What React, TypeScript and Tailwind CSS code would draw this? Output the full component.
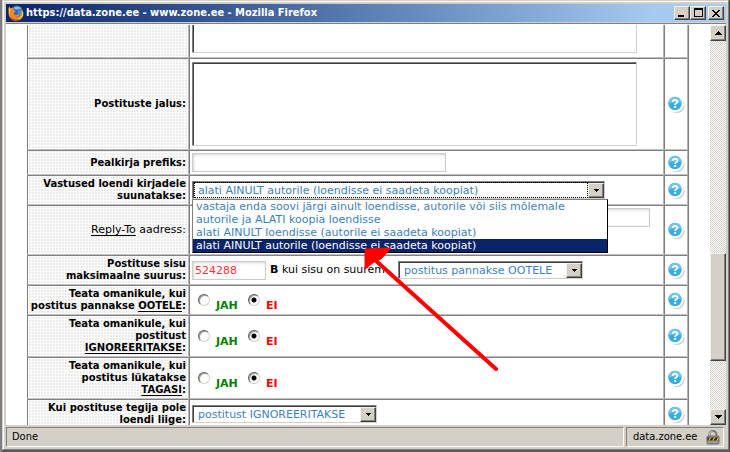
import { useState, type ReactNode } from 'react'

const REPLY_OPTIONS = [
  'vastaja enda soovi järgi ainult loendisse, autorile või siis mõlemale',
  'autorile ja ALATI koopia loendisse',
  'alati AINULT loendisse (autorile ei saadeta koopiat)',
  'alati AINULT autorile (loendisse ei saadeta koopiat)',
]

const raised = 'border border-t-[#f4f2ee] border-l-[#f4f2ee] border-r-[#404040] border-b-[#404040] bg-[#d4d0c8] shadow-[inset_-1px_-1px_0_#808080]'
const sunken = 'border border-t-[#808080] border-l-[#808080] border-r-[#d4d0c8] border-b-[#d4d0c8] shadow-[inset_1px_1px_0_#404040]'

function FirefoxIcon() {
  return (
    <svg viewBox="0 0 16 16" className="h-4 w-4 shrink-0" aria-hidden="true">
      <circle cx="9" cy="6.500" r="6" fill="#2a6cb0" />
      <path d="M6 2.500C8 .8 12 1 13.500 4c-2-.6-3 1-5 .6C7 4.500 6 4 6 2.500z" fill="#7cc0ea" />
      <path d="M10 5l3 .5.8 2.500-2 2.500-2-1z" fill="#4b8fd0" />
      <path
        d="M1 1.500l1.500 1.800C3.500 2.600 5 2.500 6 3L5 4.800l2.600.9-.6 1.500L5.500 8c.4 2 2.500 2.500 4 1.700.8-.4 1.600-.2 1.700.6-1 1.500-3 1.800-4.200 1.500 3 1.200 6-.6 6.300-4 .1-1.600-.2-3-1-4.300 2.400 1.700 3.500 4.300 3 7-.7 3.200-3.600 5.200-7 5.200C4 15.700.7 12.500.5 8.400.3 5.800.5 3.500 1 1.500z"
        fill="#f58a20"
      />
      <path d="M1 2l1.500 2.300C1.500 6 1.500 8.500 2.500 10.500 1 8.500.5 5 1 2z" fill="#ffc933" />
      <path d="M15 6c.8 4-1.500 7.500-5.500 8 2.800-1.400 5-4 5-7.500z" fill="#ffd84a" />
      <path d="M2 11c2 3.500 6 4.200 9 2.700-2.500 2.800-7.500 2-9-2.700z" fill="#c9380c" />
    </svg>
  )
}

function LockIcon() {
  return (
    <svg viewBox="0 0 14 15" className="h-[15px] w-3.5" aria-hidden="true">
      <path d="M3.500 7V4.500a3.500 3.500 0 0 1 7 0V7" fill="none" stroke="#777" strokeWidth="2" />
      <path d="M3.500 6V4.500a3 3 0 0 1 3-3" fill="none" stroke="#ccc" />
      <rect x="1" y="6" width="12" height="8" rx="1" fill="#9a9a9a" stroke="#6c6c6c" />
      <rect x="1.500" y="7.500" width="11" height="3" fill="#222" />
      <path d="M2 10.500l2-3h1.500l-2 3zM6 10.500l2-3h1.500l-2 3zM10 10.500l2-3h.5v2l-1 1z" fill="#f4c400" />
    </svg>
  )
}

function Triangle({ up }: { up?: boolean }) {
  return (
    <svg viewBox="0 0 7 4" className="h-1 w-[7px]" shapeRendering="crispEdges" aria-hidden="true">
      <path d={up ? 'M3 0h1v1h1v1h1v1h1v1H0V3h1V2h1V1h1z' : 'M0 0h7v1H6v1H5v1H4v1H3V3H2V2H1V1H0z'} />
    </svg>
  )
}

function HelpButton() {
  return (
    <button type="button" aria-label="Abi" className="block h-5 w-[22px]">
      <svg viewBox="0 0 22 20" className="h-5 w-[22px]" aria-hidden="true">
        <circle cx="12" cy="11.500" r="7.500" fill="#c8c8c8" />
        <circle cx="10.800" cy="10.200" r="8" fill="#fff" />
        <circle cx="10" cy="9.500" r="6.700" fill="#3badde" />
        <path d="M3.300 9.500a6.700 6.700 0 0 1 13.400 0c-4-1.500-9-1.500-13.400 0z" fill="#6cc6ec" />
        <path d="M7.700 8c0-2.800 4.700-2.800 4.700-.3 0 1.700-2.300 1.500-2.300 3.300" fill="none" stroke="#fff" strokeWidth="1.800" />
        <rect x="9.200" y="12" width="1.900" height="1.900" fill="#fff" />
      </svg>
    </button>
  )
}

type SelectBoxProps = {
  id: string
  options: string[]
  value: string
  onChange?: (v: string) => void
  focused?: boolean
  className: string
}

function SelectBox({ id, options, value, onChange, focused, className }: SelectBoxProps) {
  return (
    <span className={`relative block h-[18px] ${className}`}>
      <select
        id={id}
        value={value}
        onChange={(e) => onChange?.(e.target.value)}
        className={`block h-full w-full appearance-none bg-white pt-px pr-4 pl-[5px] text-[11px] leading-[14px] text-[#3c82b8] outline-none ${sunken}`}
      >
        {options.map((o) => (
          <option key={o}>{o}</option>
        ))}
      </select>
      {focused && <span className="pointer-events-none absolute top-px right-[17px] bottom-px left-0.5 border border-dotted border-black" />}
      <span className={`pointer-events-none absolute top-0.5 right-px bottom-px flex w-4 items-center justify-center ${raised}`}>
        <svg viewBox="0 0 5 3" className="h-[3px] w-[5px]" shapeRendering="crispEdges" aria-hidden="true">
          <path d="M0 0h5v1H4v1H3v1H2V2H1V1H0z" />
        </svg>
      </span>
    </span>
  )
}

type RowProps = {
  label: ReactNode
  htmlFor?: string
  height: string
  plain?: boolean
  children: ReactNode
}

function Row({ label, htmlFor, height, plain, children }: RowProps) {
  const cell = 'border border-t-[#808080] border-l-[#808080] border-r-[#b4b4b4] border-b-[#c0c0c0] align-middle'
  return (
    <tr className={height}>
      <th
        scope="row"
        className={`bg-[repeating-linear-gradient(0deg,#fff_0_1px,transparent_1px_3px),repeating-linear-gradient(90deg,#fff_0_1px,#ebebeb_1px_3px)] px-0.5 py-0 text-right leading-3 ${plain ? 'text-[11px] font-normal' : 'text-[10px] font-bold'} ${cell}`}
      >
        {htmlFor ? <label htmlFor={htmlFor}>{label}</label> : label}
      </th>
      <td className={`py-0 pr-0 pl-0.5 ${cell}`}>{children}</td>
      <td className={`p-0 ${cell}`}>
        <HelpButton />
      </td>
    </tr>
  )
}

function YesNo({ name }: { name: string }) {
  const [yes, setYes] = useState(false)
  const radio =
    'h-3 w-3 shrink-0 appearance-none rounded-full border border-t-[#606060] border-l-[#606060] border-r-[#d4d0c8] border-b-[#d4d0c8] bg-white shadow-[inset_1px_1px_0_#a0a0a0] checked:bg-[radial-gradient(circle,#000_0_2px,#fff_3px)]'
  return (
    <div className="flex gap-2 pt-1.5 pl-1.5 text-[11px] leading-3 font-bold">
      <label className="flex w-[42px] items-start gap-1.5 text-[#008000]">
        <input type="radio" name={name} checked={yes} onChange={() => setYes(true)} className={radio} />
        <span className="pt-1.5">JAH</span>
      </label>
      <label className="flex items-start gap-1.5 text-[#ff0000]">
        <input type="radio" name={name} checked={!yes} onChange={() => setYes(false)} className={radio} />
        <span className="pt-1.5">EI</span>
      </label>
    </div>
  )
}

const textInput =
  'block h-[19px] border border-[#ccc] bg-white px-0.5 text-[11px] leading-4 text-[#ff3333] shadow-[inset_1px_1px_3px_#d8d8d8] outline-none'
const textArea = `block w-[445px] max-w-full resize-none bg-white outline-none ${sunken}`

export default function App() {
  const [reply, setReply] = useState(REPLY_OPTIONS[3])

  return (
    <div className="h-screen border-l-2 border-[#808080] bg-[#d4d0c8] font-['DejaVu_Sans',sans-serif] text-black">
      <div className="flex h-full flex-col border-r border-b-2 border-r-[#404040] border-b-[#5a5a5a]">
        <div className="flex min-h-0 flex-1 flex-col border border-t-[#d4d0c8] border-l-[#d4d0c8] border-r-[#808080] border-b-[#808080]">
          <div className="flex min-h-0 flex-1 flex-col border-t border-l border-white px-0.5 pt-0.5">
            <header className="flex h-[18px] shrink-0 items-center bg-linear-to-r from-[#0a246a] to-[#a6caf0] to-90% pr-0.5 pl-0.5">
              <FirefoxIcon />
              <h1 className="ml-0.5 flex-1 truncate font-['DejaVu_Sans_Condensed','DejaVu_Sans',sans-serif] text-[11px] leading-4 font-bold text-white">
                https://data.zone.ee - www.zone.ee - Mozilla Firefox
              </h1>
              <button type="button" aria-label="Minimize" className={`flex h-3.5 w-4 items-end pb-0.5 pl-[3px] ${raised}`}>
                <span className="block h-0.5 w-1.5 bg-black" />
              </button>
              <button type="button" aria-label="Maximize" className={`flex h-3.5 w-4 justify-center pt-px ${raised}`}>
                <span className="block h-[9px] w-[9px] border border-t-2 border-black" />
              </button>
              <button type="button" aria-label="Close" className={`ml-0.5 flex h-3.5 w-4 items-center justify-center ${raised}`}>
                <svg viewBox="0 0 8 7" className="h-[7px] w-2" shapeRendering="crispEdges" aria-hidden="true">
                  <path d="M0 0h2v1h1v1h2V1h1V0h2v1H7v1H6v1H5v1h1v1h1v1h1v1H6V6H5V5H3v1H2v1H0V6h1V5h1V4h1V3H2V2H1V1H0z" />
                </svg>
              </button>
            </header>
            <div className="mt-px h-0.5 shrink-0 border-t border-[#808080] bg-white" />

            <div className="flex min-h-0 flex-1">
              <main className="relative min-w-0 flex-1 overflow-hidden bg-white px-[21px]">
                <table className="w-full table-fixed border-separate border-spacing-0 border-r border-[#808080]">
                  <colgroup>
                    <col className="w-[162px]" />
                    <col />
                    <col className="w-6" />
                  </colgroup>
                  <tbody>
                    <tr className="h-[33px]">
                      <td className="border-r border-b border-l border-r-[#b4b4b4] border-b-[#c0c0c0] border-l-[#808080] bg-[repeating-linear-gradient(0deg,#fff_0_1px,transparent_1px_3px),repeating-linear-gradient(90deg,#fff_0_1px,#ebebeb_1px_3px)] p-0" />
                      <td className="border-r border-b border-l border-r-[#b4b4b4] border-b-[#c0c0c0] border-l-[#808080] py-0 pr-0 pl-0.5 align-top">
                        <textarea
                          aria-label="Postituste päis"
                          className="block h-7 w-[445px] max-w-full resize-none border border-t-0 border-l-[#808080] border-r-[#d4d0c8] border-b-[#d4d0c8] bg-white shadow-[inset_1px_0_0_#404040] outline-none"
                        />
                      </td>
                      <td className="border-r border-b border-l border-r-[#b4b4b4] border-b-[#c0c0c0] border-l-[#808080] p-0" />
                    </tr>
                    <Row label="Postituste jalus:" htmlFor="footer" height="h-[92px]">
                      <textarea id="footer" className={`${textArea} h-[84px]`} />
                    </Row>
                    <Row label="Pealkirja prefiks:" htmlFor="prefix" height="h-[25px]">
                      <input id="prefix" type="text" className={`${textInput} w-[254px]`} />
                    </Row>
                    <Row label="Vastused loendi kirjadele suunatakse:" htmlFor="reply" height="h-[30px]">
                      <div className="relative w-[413px]">
                        <SelectBox id="reply" options={REPLY_OPTIONS} value={reply} onChange={setReply} focused className="w-full" />
                        <ul className="absolute top-full left-0 z-10 w-[416px] border border-t-[#808080] border-l-[#808080] border-r-black border-b-black bg-white text-[11px] leading-[13px] text-[#3c82b8]">
                          {REPLY_OPTIONS.map((o) => (
                            <li
                              key={o}
                              onClick={() => setReply(o)}
                              className={`cursor-default pl-[3px] whitespace-nowrap ${o === reply ? 'bg-[#0a246a] text-white' : ''}`}
                            >
                              {o}
                            </li>
                          ))}
                        </ul>
                      </div>
                    </Row>
                    <Row label={<><u className="underline-offset-2">Reply-To</u> aadress:</>} htmlFor="address" height="h-[50px]" plain>
                      <div className="h-11">
                        <input id="address" type="text" className={`${textInput} w-[458px]`} />
                      </div>
                    </Row>
                    <Row label={<>Postituse sisu<br />maksimaalne suurus:</>} htmlFor="size" height="h-[30px]">
                      <div className="flex items-center text-[11px]">
                        <input id="size" type="text" defaultValue="524288" className={`${textInput} w-[74px]`} />
                        <label htmlFor="oversize" className="w-[132px] pl-1 whitespace-nowrap">
                          <b>B</b> kui sisu on suurem
                        </label>
                        <SelectBox id="oversize" options={['postitus pannakse OOTELE']} value="postitus pannakse OOTELE" className="w-[185px]" />
                      </div>
                    </Row>
                    <Row label={<>Teata omanikule, kui<br />postitus pannakse <u className="underline-offset-2">OOTELE</u>:</>} height="h-[30px]">
                      <YesNo name="held" />
                    </Row>
                    <Row label={<>Teata omanikule, kui<br />postitust<br /><u className="underline-offset-2">IGNOREERITAKSE</u>:</>} height="h-[42px]">
                      <YesNo name="ignored" />
                    </Row>
                    <Row label={<>Teata omanikule, kui<br />postitus lükatakse<br /><u className="underline-offset-2">TAGASI</u>:</>} height="h-[42px]">
                      <YesNo name="rejected" />
                    </Row>
                    <Row label={<>Kui postituse tegija pole<br />loendi liige:</>} htmlFor="nonmember" height="h-[30px]">
                      <SelectBox id="nonmember" options={['postitust IGNOREERITAKSE']} value="postitust IGNOREERITAKSE" className="w-[185px]" />
                    </Row>
                  </tbody>
                </table>

                <svg viewBox="0 0 136 124" className="pointer-events-none absolute top-[222px] left-[357px] z-20 h-[124px] w-[136px]" aria-hidden="true">
                  <path d="M11 12L133 122" stroke="#f00" strokeWidth="4" strokeLinecap="round" />
                  <path d="M2 2L28 1L18 12L11 15L2 22z" fill="#f00" stroke="#f00" />
                </svg>
              </main>

              <div className="flex w-4 flex-col bg-[repeating-conic-gradient(#d4d0c8_0_25%,#fff_0_50%)] bg-size-[2px_2px]">
                <button type="button" aria-label="Scroll up" className={`flex h-4 items-center justify-center ${raised}`}>
                  <Triangle up />
                </button>
                <div className="flex-[213]" />
                <div className={`flex-[107] ${raised}`} />
                <div className="flex-[48]" />
                <button type="button" aria-label="Scroll down" className={`flex h-4 items-center justify-center ${raised}`}>
                  <Triangle />
                </button>
              </div>
            </div>

            <footer className="flex h-6 shrink-0 gap-0.5 pt-0.5 pr-0.5 pb-0.5 font-['DejaVu_Sans_Condensed','DejaVu_Sans',sans-serif] text-[11px] leading-[18px]">
              <div className="flex-1 border border-t-[#808080] border-l-[#808080] border-r-white border-b-white pl-[5px]">Done</div>
              <div className="flex w-[98px] items-center justify-between border border-t-[#808080] border-l-[#808080] border-r-white border-b-white pr-[3px] pl-1.5">
                data.zone.ee
                <LockIcon />
              </div>
            </footer>
          </div>
        </div>
      </div>
    </div>
  )
}
